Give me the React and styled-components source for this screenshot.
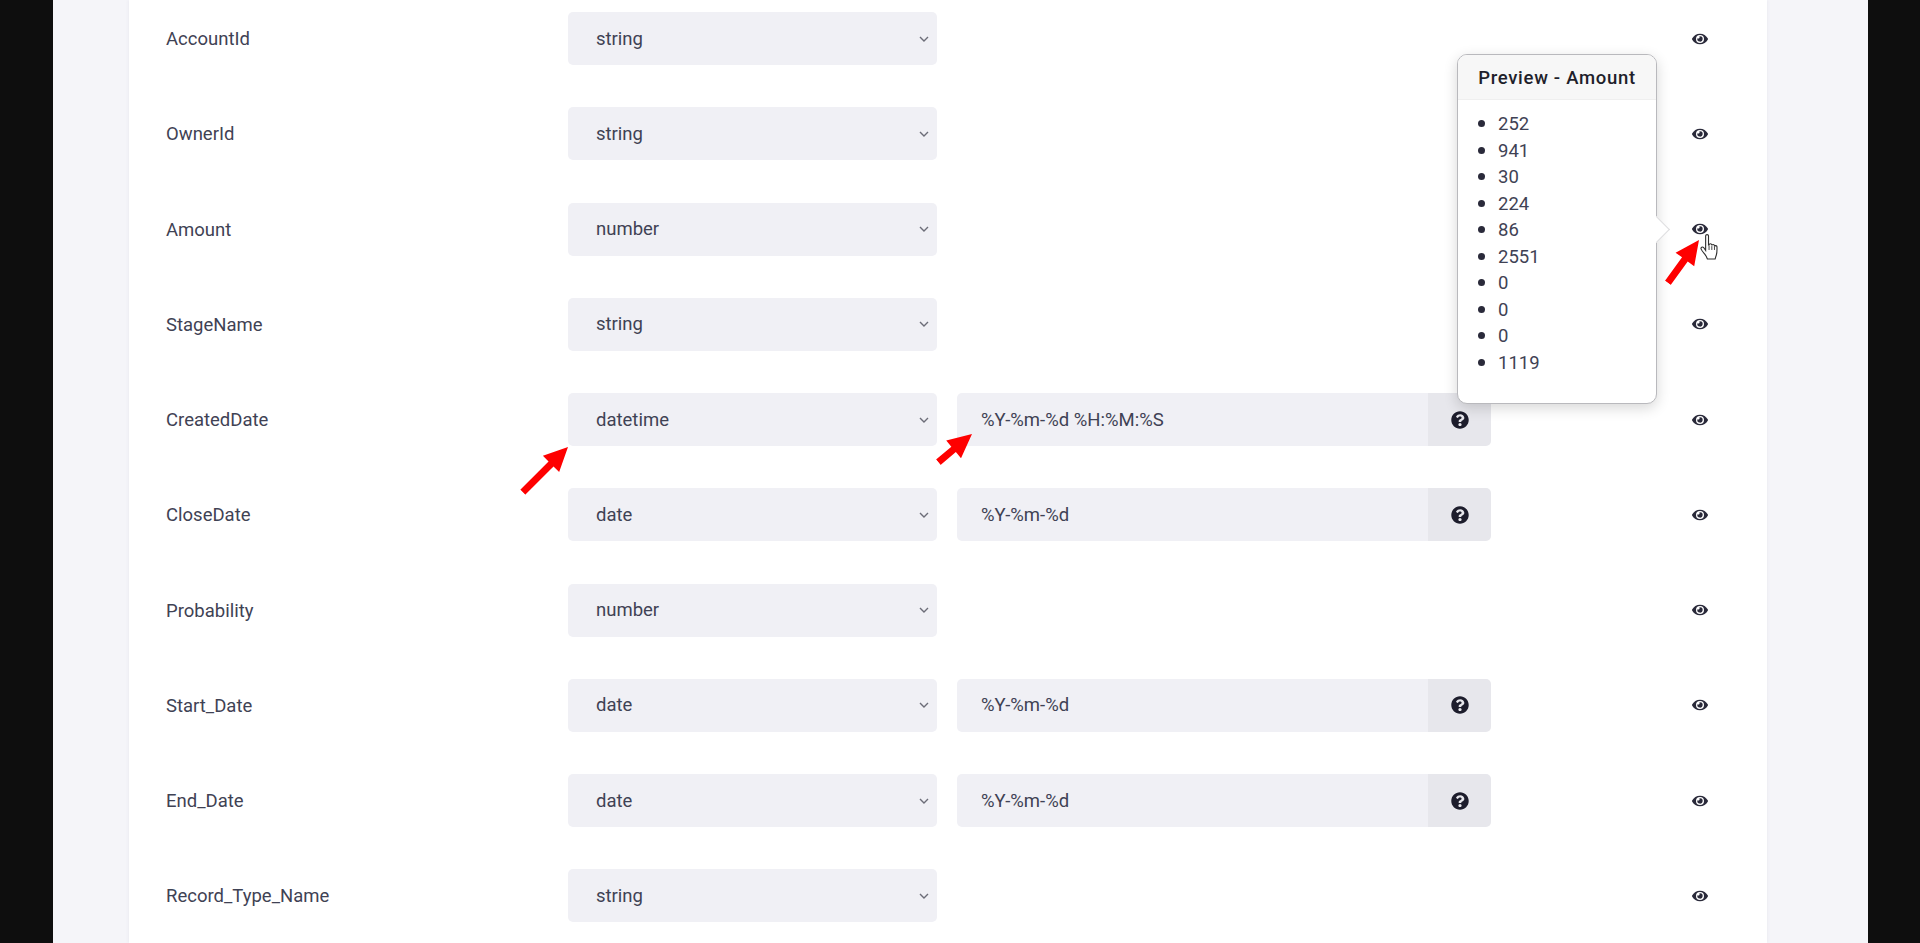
import React from "react";
import styled, { createGlobalStyle } from "styled-components";
import { FaEye, FaQuestionCircle } from "react-icons/fa";

const rows = [
  { name: "AccountId", type: "string" },
  { name: "OwnerId", type: "string" },
  { name: "Amount", type: "number", pointer: true },
  { name: "StageName", type: "string" },
  { name: "CreatedDate", type: "datetime", format: "%Y-%m-%d %H:%M:%S" },
  { name: "CloseDate", type: "date", format: "%Y-%m-%d" },
  { name: "Probability", type: "number" },
  { name: "Start_Date", type: "date", format: "%Y-%m-%d" },
  { name: "End_Date", type: "date", format: "%Y-%m-%d" },
  { name: "Record_Type_Name", type: "string" },
];

const preview = [252, 941, 30, 224, 86, 2551, 0, 0, 0, 1119];

// red annotation arrow, drawn pointing right and rotated around its tip
const Arrow = ({ tipX, tipY, length, angle }) => (
  <ArrowMark
    $x={tipX - length}
    $y={tipY - 13}
    $angle={angle}
    width={length}
    height="26"
    viewBox={`0 0 ${length} 26`}
  >
    <path d={`M0 9.500H${length - 24}V1.500L${length} 13 ${length - 24} 24.500V16.500H0z`} />
  </ArrowMark>
);

const App = () => (
  <>
    <GlobalStyle />
    <Stage>
      <Page>
        <Card>
          {rows.map((row) => (
            <Row key={row.name}>
              <FieldName>{row.name}</FieldName>
              <Select>
                {row.type}
                <Chevron viewBox="0 0 10 6">
                  <path d="M1 1l4 4 4-4" />
                </Chevron>
              </Select>
              {row.format ? (
                <FormatGroup>
                  <FormatValue>{row.format}</FormatValue>
                  <Addon>
                    <FaQuestionCircle size={18} />
                  </Addon>
                </FormatGroup>
              ) : (
                <span />
              )}
              <EyeCell>
                <EyeAnchor>
                  <FaEye size={16} />
                  {row.pointer && (
                    <>
                      <Popover>
                        <PopoverHeader>Preview - Amount</PopoverHeader>
                        <PopoverList>
                          {preview.map((value, i) => (
                            <PreviewItem key={i}>{value}</PreviewItem>
                          ))}
                        </PopoverList>
                      </Popover>
                      <HandCursor viewBox="1.500 1.500 16 24.500">
                        <path d="M6 3.200c0-1.500 2.600-1.500 2.600 0v8.300l.5-.1c0-1.400 2.400-1.400 2.500 0v.6c.1-1.300 2.300-1.300 2.400.1v.8c.2-1.200 2.200-1.100 2.300.3 0 2.800.2 5.200-.6 7.400-.7 2-1.100 3.600-1.100 3.600H7.600s-.9-2.400-2.100-3.900c-1.300-1.700-3.100-3.900-3.600-5.100-.6-1.500 1.200-2.500 2.300-1.400L6 16.400z" />
                        <path d="M9.100 12v4M11.600 12.500V16M14 13v3" />
                      </HandCursor>
                      <Arrow tipX={7} tipY={19} length={53} angle={-54} />
                    </>
                  )}
                </EyeAnchor>
              </EyeCell>
              {row.type === "datetime" && (
                <>
                  <Arrow tipX={402} tipY={54} length={64} angle={-45} />
                  <Arrow tipX={806} tipY={41} length={44} angle={-40} />
                </>
              )}
            </Row>
          ))}
        </Card>
      </Page>
    </Stage>
  </>
);

const GlobalStyle = createGlobalStyle`
  html, body {
    margin: 0;
    height: 100%;
    overflow: hidden;
    background: #0e0e0e;
  }
`;

const Stage = styled.div`
  height: 943px;
  padding: 0 52px 0 53px;
  overflow: hidden;
  box-sizing: border-box;
`;

const Page = styled.main`
  height: 100%;
  background-color: #f5f5f9;
  padding: 0 101px 0 76px;
`;

const Card = styled.section`
  height: 100%;
  background-color: #ffffff;
  box-shadow: 0 0 4px rgba(60, 60, 110, 0.08);
  padding: 12px 0 0 37px;
  display: flex;
  flex-direction: column;
  gap: 42.25px;
  box-sizing: border-box;
  font-family: Roboto, sans-serif;
  color: #3f4254;
`;

const Row = styled.div`
  position: relative;
  display: grid;
  grid-template-columns: 402px 369px 554px 1fr;
  grid-template-rows: 53px;
  align-items: center;
  height: 53px;
  flex: none;
  font-size: 18.5px;
`;

const FieldName = styled.div`
  height: 53px;
  box-sizing: border-box;
  padding-top: 1px;
  line-height: 52px;
`;

const Select = styled.div`
  height: 53px;
  padding: 0 8px 0 28px;
  background-color: #f0f0f5;
  border-radius: 5px;
  display: flex;
  align-items: center;
  justify-content: space-between;
  box-sizing: border-box;
`;

const Chevron = styled.svg`
  width: 10px;
  height: 6px;
  fill: none;
  stroke: #6c6d78;
  stroke-width: 1.4;
`;

const FormatGroup = styled.div`
  display: flex;
  height: 53px;
  margin-left: 20px;
  border-radius: 5px;
  overflow: hidden;
`;

const FormatValue = styled.div`
  flex: 1;
  display: flex;
  align-items: center;
  padding-left: 24px;
  background-color: #f0f0f5;
`;

const Addon = styled.div`
  width: 63px;
  display: flex;
  align-items: center;
  justify-content: center;
  background-color: #e7e7ec;
  color: #1d1d2c;
`;

const EyeCell = styled.div`
  display: flex;
  justify-content: flex-end;
  padding-right: 59px;
`;

const EyeAnchor = styled.div`
  position: relative;
  display: flex;
  color: #2a2a3a;
`;

const Popover = styled.aside`
  position: absolute;
  right: 51px;
  top: -167px;
  width: 200px;
  height: 350px;
  box-sizing: border-box;
  background-color: #ffffff;
  border: 1px solid #b9b9bd;
  border-radius: 10px;
  box-shadow: 0 4px 14px rgba(0, 0, 0, 0.16);
  z-index: 2;

  &::after {
    content: "";
    position: absolute;
    right: -10px;
    top: 165px;
    width: 18px;
    height: 18px;
    background-color: #ffffff;
    border-top: 1px solid #dddddf;
    border-right: 1px solid #dddddf;
    transform: rotate(45deg);
  }
`;

const PopoverHeader = styled.h3`
  margin: 0;
  height: 44px;
  line-height: 47px;
  text-align: center;
  font-size: 18.5px;
  font-weight: 500;
  letter-spacing: 0.7px;
  color: #1f1f2b;
  background-color: #f7f7f7;
  border-bottom: 1px solid #efefef;
  border-radius: 9px 9px 0 0;
`;

const PopoverList = styled.ul`
  margin: 0;
  padding: 10px 0 0 40px;
  font-size: 18.5px;
  color: #3f4254;
`;

const PreviewItem = styled.li`
  height: 26.5px;
  line-height: 26.5px;

  &::marker {
    font-size: 22px;
    color: #2a2a3a;
  }
`;

const HandCursor = styled.svg`
  position: absolute;
  left: 8px;
  top: 13px;
  width: 19px;
  height: 27px;
  z-index: 3;

  path:first-child {
    fill: #ffffff;
    stroke: #2f2f2f;
    stroke-width: 1;
  }
  path:last-child {
    fill: none;
    stroke: #2f2f2f;
    stroke-width: 0.8;
  }
`;

const ArrowMark = styled.svg`
  position: absolute;
  left: ${(props) => props.$x}px;
  top: ${(props) => props.$y}px;
  transform: rotate(${(props) => props.$angle}deg);
  transform-origin: right center;
  z-index: 4;

  path {
    fill: #fe0000;
  }
`;

export default App;
